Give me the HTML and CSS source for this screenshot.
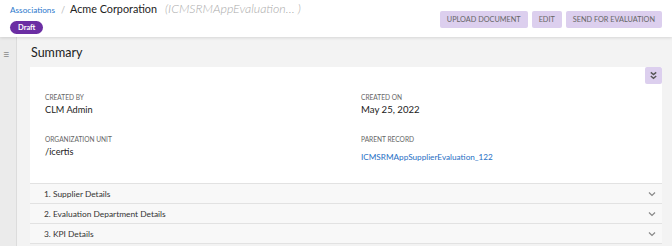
FILE: index.html
```html
<html>
<head>
	<meta http-equiv="Content-Type" content="text/html; charset=utf-8" />
	<link rel="stylesheet" href="styles.css">
</head>
<body class="page">

<div class="topbar">
	<div class="title-block">
		<div class="crumbs">
			<a class="crumb-link" href="#">Associations</a>
			<span class="crumb-sep">/</span>
			<span class="crumb-name">Acme Corporation</span>
			<span class="crumb-code">(ICMSRMAppEvaluation… )</span>
		</div>
		<span class="badge">Draft</span>
	</div>
	<div class="actions">
		<button class="btn">UPLOAD DOCUMENT</button>
		<button class="btn">EDIT</button>
		<button class="btn">SEND FOR EVALUATION</button>
	</div>
</div>

<div class="main">
	<div class="sidebar">
		<span class="hamburger">&#8801;</span>
	</div>
	<div class="content">
		<h2 class="section-title">Summary</h2>
		<div class="card">
			<button class="collapse">
				<svg width="9" height="9" viewBox="0 0 10 10"><path d="M2 1.5 L5 4 L8 1.5 M2 5.5 L5 8 L8 5.5" fill="none" stroke="#555" stroke-width="1.6"/></svg>
			</button>
			<div class="fields">
				<div class="field">
					<div class="label">CREATED BY</div>
					<div class="value">CLM Admin</div>
				</div>
				<div class="field">
					<div class="label">CREATED ON</div>
					<div class="value big">May 25, 2022</div>
				</div>
				<div class="field">
					<div class="label">ORGANIZATION UNIT</div>
					<div class="value">/icertis</div>
				</div>
				<div class="field">
					<div class="label">PARENT RECORD</div>
					<div class="value link">ICMSRMAppSupplierEvaluation_122</div>
				</div>
			</div>
		</div>
		<div class="acc">1. Supplier Details<svg class="chev" width="8" height="6" viewBox="0 0 8 6"><path d="M1 1.5 L4 4.5 L7 1.5" fill="none" stroke="#888" stroke-width="1.2"/></svg></div>
		<div class="acc">2. Evaluation Department Details<svg class="chev" width="8" height="6" viewBox="0 0 8 6"><path d="M1 1.5 L4 4.5 L7 1.5" fill="none" stroke="#888" stroke-width="1.2"/></svg></div>
		<div class="acc last">3. KPI Details<svg class="chev" width="8" height="6" viewBox="0 0 8 6"><path d="M1 1.5 L4 4.5 L7 1.5" fill="none" stroke="#888" stroke-width="1.2"/></svg></div>
	</div>
</div>

</body>
</html>
```

FILE: styles.css
```css
body {margin:0; font-family: Lato, "Noto Sans", sans-serif; color:#222;}
.page {background:#f3f3f3; height:246px; overflow:hidden;}

/* header */
.topbar {height:37px; background:#fff; display:flex; justify-content:space-between; box-shadow:0 1px 3px rgba(0,0,0,0.12); position:relative; z-index:1;}
.title-block {padding:2px 0 0 10px;}
.crumbs {display:flex; align-items:baseline; white-space:nowrap; line-height:14px; height:14px;}
.crumb-link {font-size:8.2px; color:#2b78cc; text-decoration:none;}
.crumb-sep {font-size:9px; color:#bbb; margin:0 5px 0 6px;}
.crumb-name {font-size:10.8px; color:#222;}
.crumb-code {font-size:12.4px; color:#aaa; font-style:italic; font-weight:300; margin-left:8px;}
.badge {display:inline-block; margin-top:5px; background:#6b2ea3; color:#fff; font-size:7.5px; font-weight:bold; line-height:13px; padding:0 8px; border-radius:7px;}
.actions {display:flex; gap:4px; padding:11px 10px 0 0;}
.btn {height:17px; border:none; border-radius:2px; background:#dccfee; color:#666; font-family:inherit; font-size:7.3px; padding:0 7px; cursor:pointer;}

/* body */
.main {display:flex; height:209px;}
.sidebar {width:16px; background:#ebebeb; border-right:1px solid #dcdcdc;}
.hamburger {display:block; margin:11px 0 0 3px; font-size:11px; color:#888; line-height:11px;}
.content {flex:1; padding:0 10px 0 13px;}
.section-title {margin:0; font-size:12.5px; line-height:15px; font-weight:normal; color:#222; padding:8px 0 0 1px; height:22px;}
.card {background:#fff; position:relative; padding:25px 0 20px 15px;}
.collapse {position:absolute; top:0; right:0; width:17px; height:17px; border:none; border-radius:2px; background:#dccfee; padding:0; display:flex; align-items:center; justify-content:center;}
.fields {display:grid; grid-template-columns:316px 1fr; row-gap:18px;}
.label {font-size:6.6px; line-height:10px; color:#666;}
.value {font-size:9.2px; line-height:12px; color:#222; margin-top:2px;}
.value.big {font-size:9.6px;}
.value.link {color:#1f6fc5; font-size:8.2px; margin-top:7px;}

.acc {height:19px; background:#f8f8f8; border-top:1px solid #e2e2e2; font-size:8.4px; color:#333; display:flex; align-items:center; justify-content:space-between; padding:0 6px 0 14px;}
.acc.last {border-bottom:1px solid #e2e2e2;}
.chev {margin-top:1px;}
```
